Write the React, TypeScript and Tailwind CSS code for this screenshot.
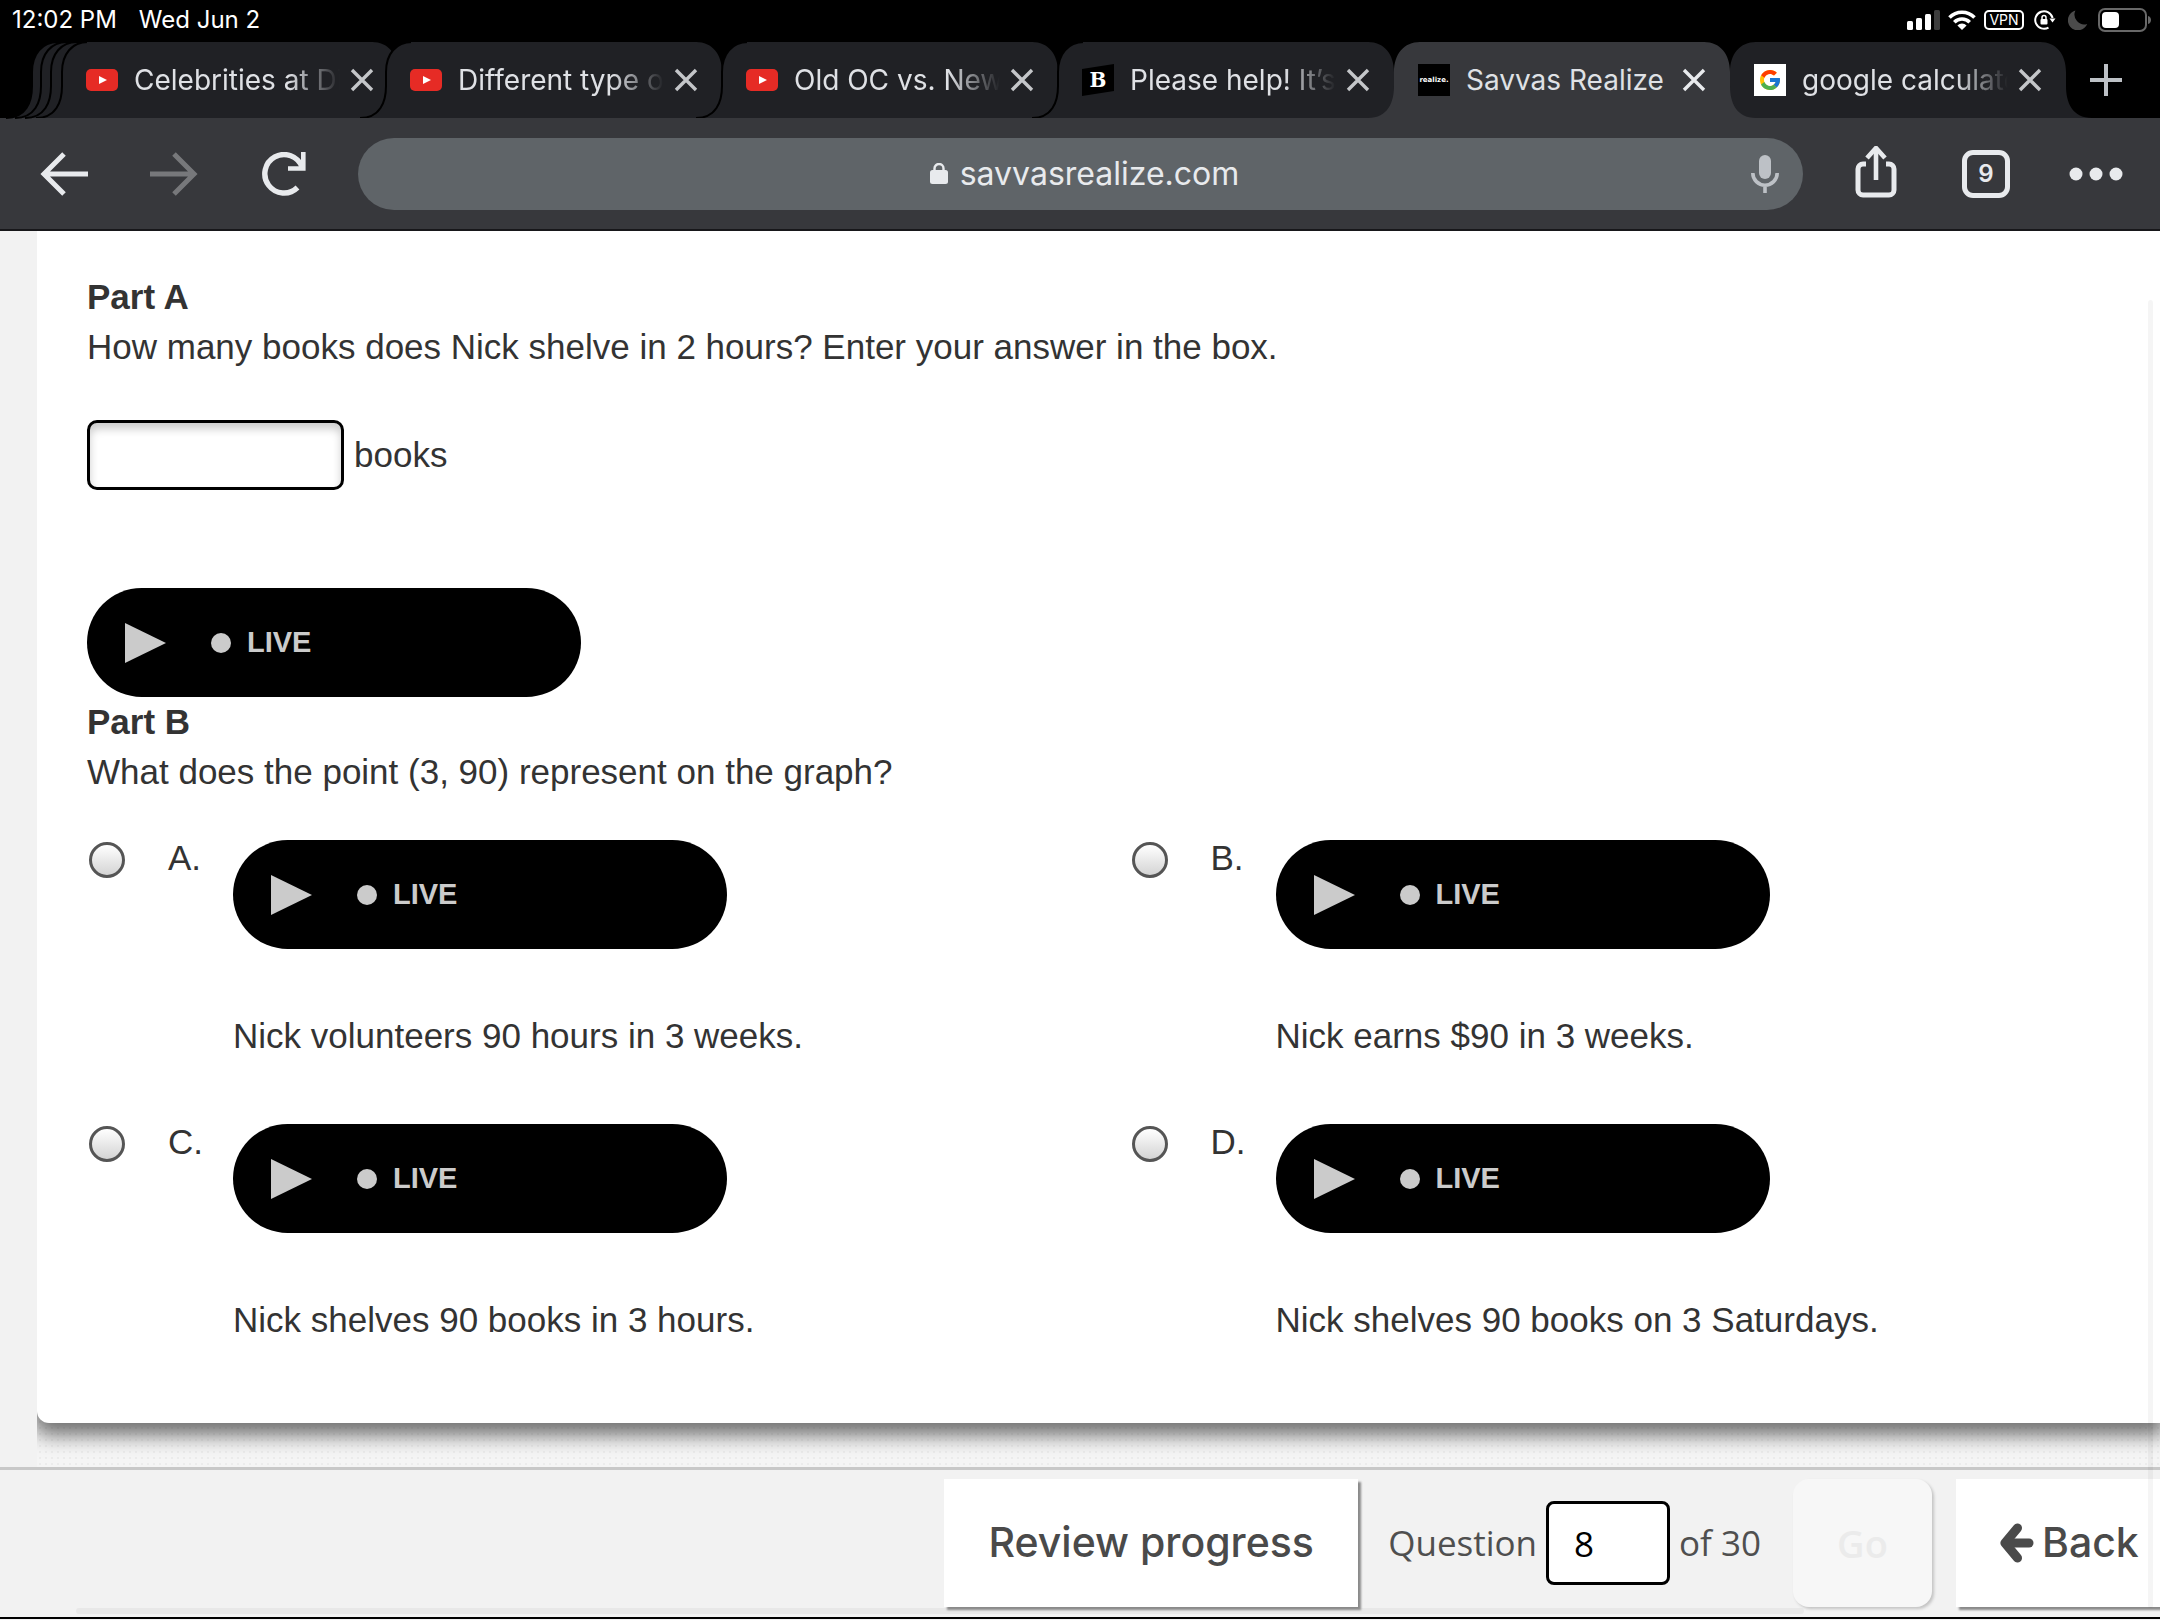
import type { ReactNode } from 'react';
import { FcGoogle } from 'react-icons/fc';

function YouTubeIcon() {
    return (
        <svg className="w-8 h-[22px]" viewBox="0 0 32 22">
            <rect width="32" height="22" rx="5" fill="#e62b25" />
            <path d="M13 7v8l8-4z" fill="#fff" />
        </svg>
    );
}

function BrainlyIcon() {
    return (
        <span className="relative flex w-8 h-8 items-center justify-center">
            <svg className="absolute inset-0" viewBox="0 0 32 32">
                <path d="M0 5L32 0v27L0 32z" fill="#000" />
            </svg>
            <span className="relative font-['DejaVu_Serif',serif] text-xl leading-none font-bold text-white">B</span>
        </span>
    );
}

function RealizeIcon() {
    return (
        <span className="flex w-8 h-8 items-center justify-center bg-black">
            <span className="font-['DejaVu_Sans',sans-serif] text-[7px] font-bold text-white">realize.</span>
        </span>
    );
}

function GoogleIcon() {
    return (
        <span className="flex w-8 h-8 items-center justify-center bg-white">
            <FcGoogle className="w-6 h-6" />
        </span>
    );
}

const tabs = [
    { title: 'Celebrities at Disney', icon: <YouTubeIcon />, layer: 'z-0 -mr-3', active: false, outlined: true },
    { title: 'Different type of', icon: <YouTubeIcon />, layer: 'z-10', active: false, outlined: true },
    { title: 'Old OC vs. New OC', icon: <YouTubeIcon />, layer: 'z-20', active: false, outlined: true },
    { title: 'Please help! It’s due', icon: <BrainlyIcon />, layer: 'z-30', active: false, outlined: true },
    { title: 'Savvas Realize', icon: <RealizeIcon />, layer: 'z-40', active: true, outlined: false },
    { title: 'google calculator', icon: <GoogleIcon />, layer: 'z-0', active: false, outlined: false },
];

const answers = [
    { letter: 'A', text: 'Nick volunteers 90 hours in 3 weeks.' },
    { letter: 'B', text: 'Nick earns $90 in 3 weeks.' },
    { letter: 'C', text: 'Nick shelves 90 books in 3 hours.' },
    { letter: 'D', text: 'Nick shelves 90 books on 3 Saturdays.' },
];

const EDGE = 'M0 76C20 76 26 60 26 44V30C26 12 36 0 52 0';

// One curved side of a tab, flaring out at the bottom
function TabEdge({ fill, outlined }: { fill: string; outlined: boolean }) {
    return (
        <svg className="block w-[52px] h-[76px]" viewBox="0 0 52 76">
            <path d={`${EDGE}V76z`} fill={fill} />
            {outlined && <path d={EDGE} fill="none" stroke="#000" strokeWidth="2" />}
        </svg>
    );
}

function Tab({ title, icon, layer, active, outlined }: {
    title: string;
    icon: ReactNode;
    layer: string;
    active: boolean;
    outlined: boolean;
}) {
    const fill = active ? '#37383c' : '#202125';
    return (
        <div className={`relative min-w-0 flex-1 ${layer}`}>
            <div className="absolute inset-y-0 -left-[26px]">
                <TabEdge fill={fill} outlined={outlined} />
            </div>
            <div className="absolute inset-y-0 -right-[26px] -scale-x-100">
                <TabEdge fill={fill} outlined={false} />
            </div>
            <div className={`absolute inset-y-0 inset-x-[25px] ${active ? 'bg-[#37383c]' : 'bg-[#202125]'}`} />
            <div className="relative flex h-full items-center pl-6 pr-[22px]">
                <span className="shrink-0">{icon}</span>
                <button
                    className={`ml-4 min-w-0 flex-1 overflow-hidden whitespace-nowrap text-left text-[28px] leading-9 text-[#dfe1e5] ${active ? '' : 'mask-r-from-75% mask-r-to-100%'}`}
                >
                    {title}
                </button>
                <button aria-label={`Close ${title}`} className="ml-2 shrink-0">
                    <svg className="w-7 h-7" viewBox="0 0 28 28" stroke={active ? '#e8eaed' : '#c4c6c9'} strokeWidth="3.4">
                        <path d="M4 4L24 24M24 4L4 24" />
                    </svg>
                </button>
            </div>
        </div>
    );
}

function StatusBar() {
    return (
        <div className="flex h-[42px] items-center justify-between pl-3 pr-2 pb-[2px] text-2xl leading-none text-white">
            <div className="flex gap-[22px]">
                <span>12:02 PM</span>
                <span>Wed Jun 2</span>
            </div>
            <div className="flex items-center gap-2">
                <svg className="w-[33px] h-5" viewBox="0 0 33 20" fill="#fff">
                    <rect x="0" y="11" width="6" height="9" rx="1.5" />
                    <rect x="9" y="8" width="6" height="12" rx="1.5" />
                    <rect x="18" y="4" width="6" height="16" rx="1.5" />
                    <rect x="27" y="0" width="6" height="20" rx="1.5" fill="#3d3d3d" />
                </svg>
                <svg className="w-7 h-5" viewBox="0 0 28 20" fill="none" stroke="#fff" strokeWidth="3.6">
                    <path d="M1.5 7.5a17.5 17.5 0 0 1 25 0" />
                    <path d="M6.3 12.3a10.8 10.8 0 0 1 15.4 0" />
                    <path d="M14 20l-4.6-4.6a6.5 6.5 0 0 1 9.2 0z" fill="#fff" stroke="none" />
                </svg>
                <span className="flex w-10 h-5 items-center justify-center rounded-[5px] border-2 border-white text-[14px]">VPN</span>
                <svg className="ml-[2px] w-[22px] h-5" viewBox="0 0 22 20" fill="none" stroke="#fff" strokeWidth="2">
                    <path d="M14.5 17.6A8.8 8.8 0 1 1 18.6 8" />
                    <path d="M15.5 8.5h6l-3 4z" fill="#fff" stroke="none" />
                    <rect x="6.5" y="9" width="7" height="5.5" rx="1" fill="#fff" stroke="none" />
                    <path d="M8 9.5V7.5a2 2 0 0 1 4 0v2" strokeWidth="1.5" />
                </svg>
                <svg className="ml-1 w-5 h-5" viewBox="0 0 20 20" fill="#4b4b4b">
                    <path d="M7.4.6A9.8 9.8 0 0 0 19.2 14 10 10 0 1 1 7.4.6z" />
                </svg>
                <svg className="ml-[2px] w-[54px] h-6" viewBox="0 0 54 24">
                    <rect x="1" y="1" width="47" height="22" rx="6" fill="none" stroke="#686868" strokeWidth="2" />
                    <rect x="4" y="4" width="17" height="16" rx="4" fill="#fff" />
                    <path d="M50 8c4 1 4 7 0 8z" fill="#686868" />
                </svg>
            </div>
        </div>
    );
}

function TabStrip() {
    return (
        <div className="flex h-[76px]">
            <svg className="relative w-[62px] shrink-0 overflow-visible" viewBox="0 0 62 76">
                {[6, 15, 25].map((x) => (
                    <g key={x} transform={`translate(${x} 0)`}>
                        <path d={`${EDGE}V76z`} fill="#202125" />
                        <path d={EDGE} fill="none" stroke="#000" strokeWidth="2" />
                    </g>
                ))}
            </svg>
            <div className="flex min-w-0 flex-1">
                {tabs.map((tab) => (
                    <Tab key={tab.title} {...tab} />
                ))}
            </div>
            <button aria-label="New tab" className="flex w-[94px] shrink-0 items-center justify-center pr-[14px]">
                <svg className="w-8 h-8" viewBox="0 0 32 32" stroke="#bdc1c6" strokeWidth="4">
                    <path d="M16 0V32M0 16H32" />
                </svg>
            </button>
        </div>
    );
}

function Toolbar() {
    return (
        <div className="flex h-[113px] items-center border-b-2 border-[#17171a] bg-[#37383c] pl-10 pr-9 text-[#e8eaed]">
            <button aria-label="Back">
                <svg className="w-12 h-11" viewBox="0 0 48 44" fill="none" stroke="currentColor" strokeWidth="5">
                    <path d="M48 22H4M24 2L4 22L24 42" />
                </svg>
            </button>
            <button aria-label="Forward" className="ml-[62px] text-[#77787b]">
                <svg className="w-12 h-11" viewBox="0 0 48 44" fill="none" stroke="currentColor" strokeWidth="5">
                    <path d="M0 22H44M24 2L44 22L24 42" />
                </svg>
            </button>
            <button aria-label="Reload" className="ml-16">
                <svg className="w-11 h-11" viewBox="0 0 44 44" fill="none" stroke="currentColor" strokeWidth="5.4">
                    <path d="M35.5 35.5A19.2 19.2 0 1 1 40 15" />
                    <path d="M26 16.5H41.3V0" strokeWidth="4.6" />
                </svg>
            </button>
            <div className="ml-[52px] flex h-[72px] min-w-0 flex-1 items-center rounded-full bg-[#5f6468] pr-6">
                <button className="ml-[60px] flex flex-1 items-center justify-center gap-3 text-[32px] leading-10">
                    <svg className="w-[18px] h-[21px]" viewBox="0 0 18 21">
                        <rect y="7" width="18" height="14" rx="2.5" fill="currentColor" />
                        <path d="M4.5 8V5.5a4.5 4.5 0 0 1 9 0V8" fill="none" stroke="currentColor" strokeWidth="2.4" />
                    </svg>
                    savvasrealize.com
                </button>
                <button aria-label="Voice search" className="text-[#bdc1c6]">
                    <svg className="w-7 h-[38px]" viewBox="0 0 28 38" fill="none" stroke="currentColor" strokeWidth="3.6">
                        <rect x="8" y="0" width="12" height="24" rx="6" fill="currentColor" stroke="none" />
                        <path d="M1.8 18a12.2 12.2 0 0 0 24.4 0M14 30V38" />
                    </svg>
                </button>
            </div>
            <button aria-label="Share" className="ml-[52px]">
                <svg className="w-[42px] h-14" viewBox="0 2 42 56" fill="none" stroke="currentColor" strokeWidth="5">
                    <path d="M11 20H8a5 5 0 0 0-5 5V46a5 5 0 0 0 5 5H34a5 5 0 0 0 5-5V25a5 5 0 0 0-5-5H31" />
                    <path d="M21 36V4" strokeWidth="4.6" />
                    <path d="M12 14L21 4L30 14" strokeWidth="4.6" />
                </svg>
            </button>
            <button aria-label="9 open tabs" className="ml-[65px] flex w-12 h-12 items-center justify-center rounded-[11px] border-5 border-[#e8eaed] text-2xl leading-none font-semibold">
                9
            </button>
            <button aria-label="Menu" className="ml-[59px]">
                <svg className="w-[55px] h-4" viewBox="0 0 55 16" fill="currentColor">
                    <circle cx="7" cy="8" r="6.5" />
                    <circle cx="27" cy="8" r="6.5" />
                    <circle cx="47" cy="8" r="6.5" />
                </svg>
            </button>
        </div>
    );
}

function AudioPlayer() {
    return (
        <div className="flex h-[109px] w-[494px] items-center rounded-full bg-black pl-[38px] text-[#cbcbcb]">
            <button aria-label="Play">
                <svg className="w-[41px] h-10" viewBox="0 0 41 40" fill="currentColor">
                    <path d="M0 0L41 20L0 40z" />
                </svg>
            </button>
            <span className="ml-[45px] w-5 h-5 rounded-full bg-[#cbcbcb]" />
            <span className="ml-4 text-[29px] leading-none font-bold">LIVE</span>
        </div>
    );
}

function Question() {
    return (
        <main className="rounded-bl-xl bg-white pt-[41px] pb-[78px] pl-[50px] font-['Liberation_Sans',sans-serif] text-[35px] leading-[50px] text-[#333] shadow-[0_8px_20px_4px_rgba(0,0,0,0.55)]">
            <h2 className="font-bold">Part A</h2>
            <p>How many books does Nick shelve in 2 hours? Enter your answer in the box.</p>
            <div className="mt-12 mb-[98px] flex items-center gap-[10px]">
                <input
                    id="books"
                    type="text"
                    className="h-[70px] w-[257px] rounded-[10px] border-3 border-black px-4 shadow-[inset_0_6px_8px_rgba(0,0,0,0.2)]"
                />
                <label htmlFor="books">books</label>
            </div>
            <AudioPlayer />
            <h2 className="font-bold">Part B</h2>
            <p>What does the point (3, 90) represent on the graph?</p>
            <div className="mt-[43px] grid grid-cols-2 gap-x-3 gap-y-[63px]">
                {answers.map(({ letter, text }) => (
                    <div key={letter} className="flex items-start">
                        <input
                            id={`answer-${letter}`}
                            type="radio"
                            name="answer"
                            className="mt-[2px] ml-[2px] w-9 h-9 shrink-0 appearance-none rounded-full border-3 border-[#555] bg-linear-to-b from-white to-[#d4d4d4]"
                        />
                        <label htmlFor={`answer-${letter}`} className="ml-[43px] w-[65px] shrink-0 leading-9">
                            {letter}.
                        </label>
                        <div>
                            <AudioPlayer />
                            <p className="mt-[62px]">{text}</p>
                        </div>
                    </div>
                ))}
            </div>
        </main>
    );
}

function FooterBar() {
    const button = 'h-32 bg-white font-[Inter,sans-serif] text-[41px] font-medium text-[#4a4a4a] shadow-[3px_3px_2px_#8a8a8a]';
    return (
        <footer className="relative flex h-[150px] items-start justify-end overflow-hidden border-t-3 border-[#c8c8c8] bg-[#f2f2f2] pt-[9px] font-['Open_Sans',sans-serif] text-[35px] text-[#4f4f4f]">
            <div className="absolute bottom-[3px] left-[76px] h-[6px] w-4/5 rounded-full bg-[#e8e8e8]" />
            <button className={`relative w-[414px] ${button}`}>Review progress</button>
            <div className="relative ml-[30px] flex h-32 items-center">
                <label htmlFor="question-number">Question</label>
                <input
                    id="question-number"
                    type="text"
                    defaultValue="8"
                    className="mx-[9px] h-[84px] w-[124px] rounded-lg border-3 border-black bg-white pl-[25px] text-black"
                />
                <span>of 30</span>
            </div>
            <button disabled className="relative ml-8 h-32 w-[139px] rounded-2xl bg-[#f7f7f7] text-[38px] font-semibold text-[#ebebeb] shadow-[2px_2px_3px_#c4c4c4]">
                Go
            </button>
            <button className={`relative ml-6 flex w-[204px] shrink-0 items-center gap-2 pl-11 ${button}`}>
                <svg className="w-[34px] h-10 shrink-0" viewBox="0 0 34 40" fill="none" stroke="currentColor" strokeWidth="9" strokeLinecap="round" strokeLinejoin="round">
                    <path d="M17.500 5L5 20L17.500 35" />
                    <path d="M7 20H29" />
                </svg>
                Back
            </button>
        </footer>
    );
}

export default function App() {
    return (
        <div className="relative min-h-screen overflow-hidden bg-[#f2f2f2]">
            <header className="bg-black font-[Inter,sans-serif]">
                <StatusBar />
                <TabStrip />
                <Toolbar />
            </header>
            <div className="pl-[37px]">
                <div className="overflow-hidden bg-[#f5f5f5] bg-[radial-gradient(#ececec_1px,transparent_1px)] bg-[size:6px_6px] pb-11">
                    <Question />
                </div>
            </div>
            <FooterBar />
            <div className="h-[2px] bg-black" />
            <div className="absolute top-[300px] right-[7px] bottom-3 w-[5px] rounded-full bg-black/4" />
        </div>
    );
}
